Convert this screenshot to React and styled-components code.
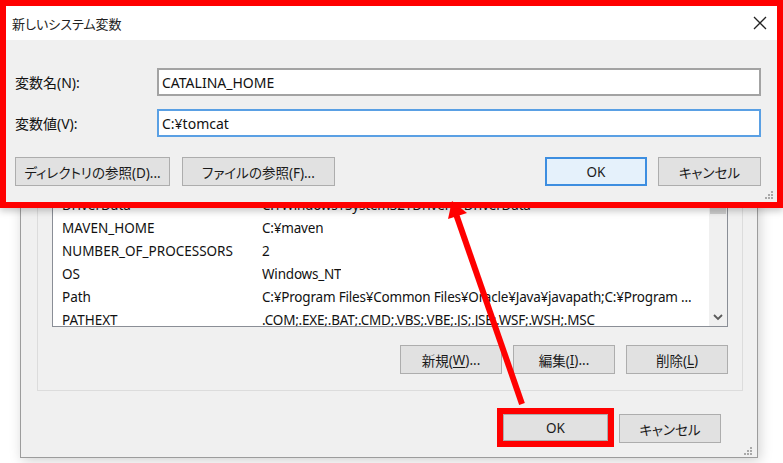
import React from "react"
import styled, { createGlobalStyle } from "styled-components"

const GlobalStyle = createGlobalStyle`
  html, body {
    margin: 0;
    padding: 0;
    background: #fff;
  }
  body {
    font-family: "Noto Sans", "Noto Sans CJK JP", sans-serif;
    font-size: 14px;
    color: #111;
    font-feature-settings: "palt";
  }
`

const rows = [
  { name: "DriverData", value: "C:¥Windows¥System32¥Drivers¥DriverData" },
  { name: "MAVEN_HOME", value: "C:¥maven" },
  { name: "NUMBER_OF_PROCESSORS", value: "2" },
  { name: "OS", value: "Windows_NT" },
  {
    name: "Path",
    value: "C:¥Program Files¥Common Files¥Oracle¥Java¥javapath;C:¥Program ...",
  },
  { name: "PATHEXT", value: ".COM;.EXE;.BAT;.CMD;.VBS;.VBE;.JS;.JSE;.WSF;.WSH;.MSC" },
]

const Grip = () => (
  <svg width="8" height="8" viewBox="0 0 8 8">
    {[
      [6, 0],
      [6, 3],
      [3, 3],
      [6, 6],
      [3, 6],
      [0, 6],
    ].map(([x, y]) => (
      <rect key={`${x}-${y}`} x={x} y={y} width="2" height="2" fill="#a9a9a9" />
    ))}
  </svg>
)

const App = () => (
  <Page>
    <GlobalStyle />

    <BackWindow>
      <GroupBox>
        <ListBox>
          <ListRows>
            {rows.map(row => (
              <ListRow key={row.name}>
                <NameCell>{row.name}</NameCell>
                <ValueCell>{row.value}</ValueCell>
              </ListRow>
            ))}
          </ListRows>
          <ScrollBar>
            <ScrollThumb />
            <ScrollTrack />
            <ScrollArrow>
              <svg width="10" height="7" viewBox="0 0 10 7">
                <polyline points="1,1 5,5 9,1" fill="none" stroke="#5a5a5a" strokeWidth="1.8" />
              </svg>
            </ScrollArrow>
          </ScrollBar>
        </ListBox>
        <ButtonRow>
          <Button $w={102}>
            新規(<u>W</u>)...
          </Button>
          <Button $w={102}>
            編集(<u>I</u>)...
          </Button>
          <Button $w={102}>
            削除(<u>L</u>)
          </Button>
        </ButtonRow>
      </GroupBox>
      <FooterRow>
        <Button $w={105} $h={27} $marked>
          OK
        </Button>
        <Button $w={102}>キャンセル</Button>
      </FooterRow>
      <GripCorner $right={5} $bottom={2}>
        <Grip />
      </GripCorner>
    </BackWindow>

    <FrontWindow>
      <TitleBar>
        <Title>新しいシステム変数</Title>
        <svg width="14" height="14" viewBox="0 0 14 14">
          <path d="M1 1 L13 13 M13 1 L1 13" stroke="#222" strokeWidth="1.3" />
        </svg>
      </TitleBar>
      <Body>
        <Fields>
          <Label>変数名(N):</Label>
          <Input>CATALINA_HOME</Input>
          <Label>変数値(V):</Label>
          <Input $focused>C:¥tomcat</Input>
        </Fields>
        <DialogButtons>
          <ButtonGroup $gap={12}>
            <Button $w={155}>ディレクトリの参照(D)...</Button>
            <Button $w={153}>ファイルの参照(F)...</Button>
          </ButtonGroup>
          <ButtonGroup $gap={11}>
            <Button $w={102} $default>
              OK
            </Button>
            <Button $w={103}>キャンセル</Button>
          </ButtonGroup>
        </DialogButtons>
        <GripCorner $right={4} $bottom={3}>
          <Grip />
        </GripCorner>
      </Body>
    </FrontWindow>

    <Arrow width="783" height="463" viewBox="0 0 783 463">
      <line x1="522" y1="404" x2="456" y2="214" stroke="#f00" strokeWidth="6" />
      <polygon points="452,201 467,213 448,219" fill="#f00" />
    </Arrow>
  </Page>
)

export default App

const Page = styled.div`
  position: relative;
  width: 783px;
  height: 463px;
  overflow: hidden;
  background: #fff;
  padding: 174px 0 0 20px;
  box-sizing: border-box;
`

const BackWindow = styled.div`
  position: relative;
  width: 738px;
  height: 284px;
  box-sizing: border-box;
  background: #f0f0f0;
  border: 1px solid #9c9c9c;
  box-shadow: 2px 3px 12px rgba(0, 0, 0, 0.18);
  padding: 3px 14px 0 16px;
  display: flex;
  flex-direction: column;
`

const GroupBox = styled.div`
  border: 1px solid #dcdcdc;
  padding: 13px 14px 16px;
  display: flex;
  flex-direction: column;
`

const ListBox = styled.div`
  height: 135px;
  box-sizing: border-box;
  border: 1px solid #8a8e96;
  background: #fff;
  display: flex;
  overflow: hidden;
`

const ListRows = styled.div`
  flex: 1;
  min-width: 0;
  display: flex;
  flex-direction: column;
`

const ListRow = styled.div`
  height: 23px;
  flex-shrink: 0;
  display: flex;
  align-items: center;
  padding-left: 9px;
  white-space: nowrap;
  overflow: hidden;
  font-size: 13.5px;
`

const NameCell = styled.span`
  width: 200px;
  flex-shrink: 0;
`

const ValueCell = styled.span`
  overflow: hidden;
  letter-spacing: -0.2px;
`

const ScrollBar = styled.div`
  width: 18px;
  background: #f0f0f0;
  display: flex;
  flex-direction: column;
  flex-shrink: 0;
`

const ScrollArrow = styled.div`
  height: 17px;
  display: flex;
  align-items: center;
  justify-content: center;
`

const ScrollThumb = styled.div`
  height: 21px;
  margin: 0 1px;
  background: #cdcdcd;
`

const ScrollTrack = styled.div`
  flex: 1;
`

const ButtonRow = styled.div`
  margin-top: 18px;
  display: flex;
  justify-content: flex-end;
  gap: 11px;
`

const FooterRow = styled.div`
  margin-top: 23px;
  padding-right: 22px;
  display: flex;
  justify-content: flex-end;
  align-items: flex-start;
  gap: 11px;
`

const Button = styled.div`
  width: ${p => p.$w}px;
  height: ${p => p.$h || 29}px;
  box-sizing: border-box;
  display: flex;
  align-items: center;
  justify-content: center;
  background: ${p => (p.$default ? "#e5f1fb" : "#e1e1e1")};
  border: ${p => (p.$default ? "2px solid #3d8ee0" : "1px solid #adadad")};
  outline: ${p => (p.$marked ? "6px solid #f00" : "none")};
  font-size: 13.5px;
  color: #1a1a1a;
  white-space: nowrap;

  u {
    text-underline-offset: 2px;
  }
`

const GripCorner = styled.div`
  position: absolute;
  right: ${p => p.$right}px;
  bottom: ${p => p.$bottom}px;
  line-height: 0;
`

const FrontWindow = styled.div`
  position: absolute;
  top: 0;
  left: 0;
  width: 783px;
  height: 208px;
  box-sizing: border-box;
  border: 6px solid #f00;
  box-shadow: 0 3px 7px rgba(0, 0, 0, 0.22);
  display: flex;
  flex-direction: column;
`

const TitleBar = styled.div`
  height: 34px;
  flex-shrink: 0;
  background: #fff;
  display: flex;
  align-items: center;
  justify-content: space-between;
  padding: 0 10px 0 6px;
`

const Title = styled.span`
  font-size: 13px;
  color: #222;
`

const Body = styled.div`
  position: relative;
  flex: 1;
  background: #f0f0f0;
  padding: 28px 16px 0 9px;
`

const Fields = styled.div`
  display: grid;
  grid-template-columns: 142px 1fr;
  row-gap: 13px;
  align-items: center;
`

const Label = styled.span`
  font-size: 14px;
`

const Input = styled.div`
  height: 28px;
  box-sizing: border-box;
  background: #fff;
  border: 2px solid ${p => (p.$focused ? "#5aa0e4" : "#a3a3a3")};
  padding-left: 3px;
  display: flex;
  align-items: center;
  font-size: 14px;
`

const DialogButtons = styled.div`
  margin-top: 20px;
  display: flex;
  justify-content: space-between;
`

const ButtonGroup = styled.div`
  display: flex;
  gap: ${p => p.$gap}px;
`

const Arrow = styled.svg`
  position: absolute;
  top: 0;
  left: 0;
  pointer-events: none;
`
